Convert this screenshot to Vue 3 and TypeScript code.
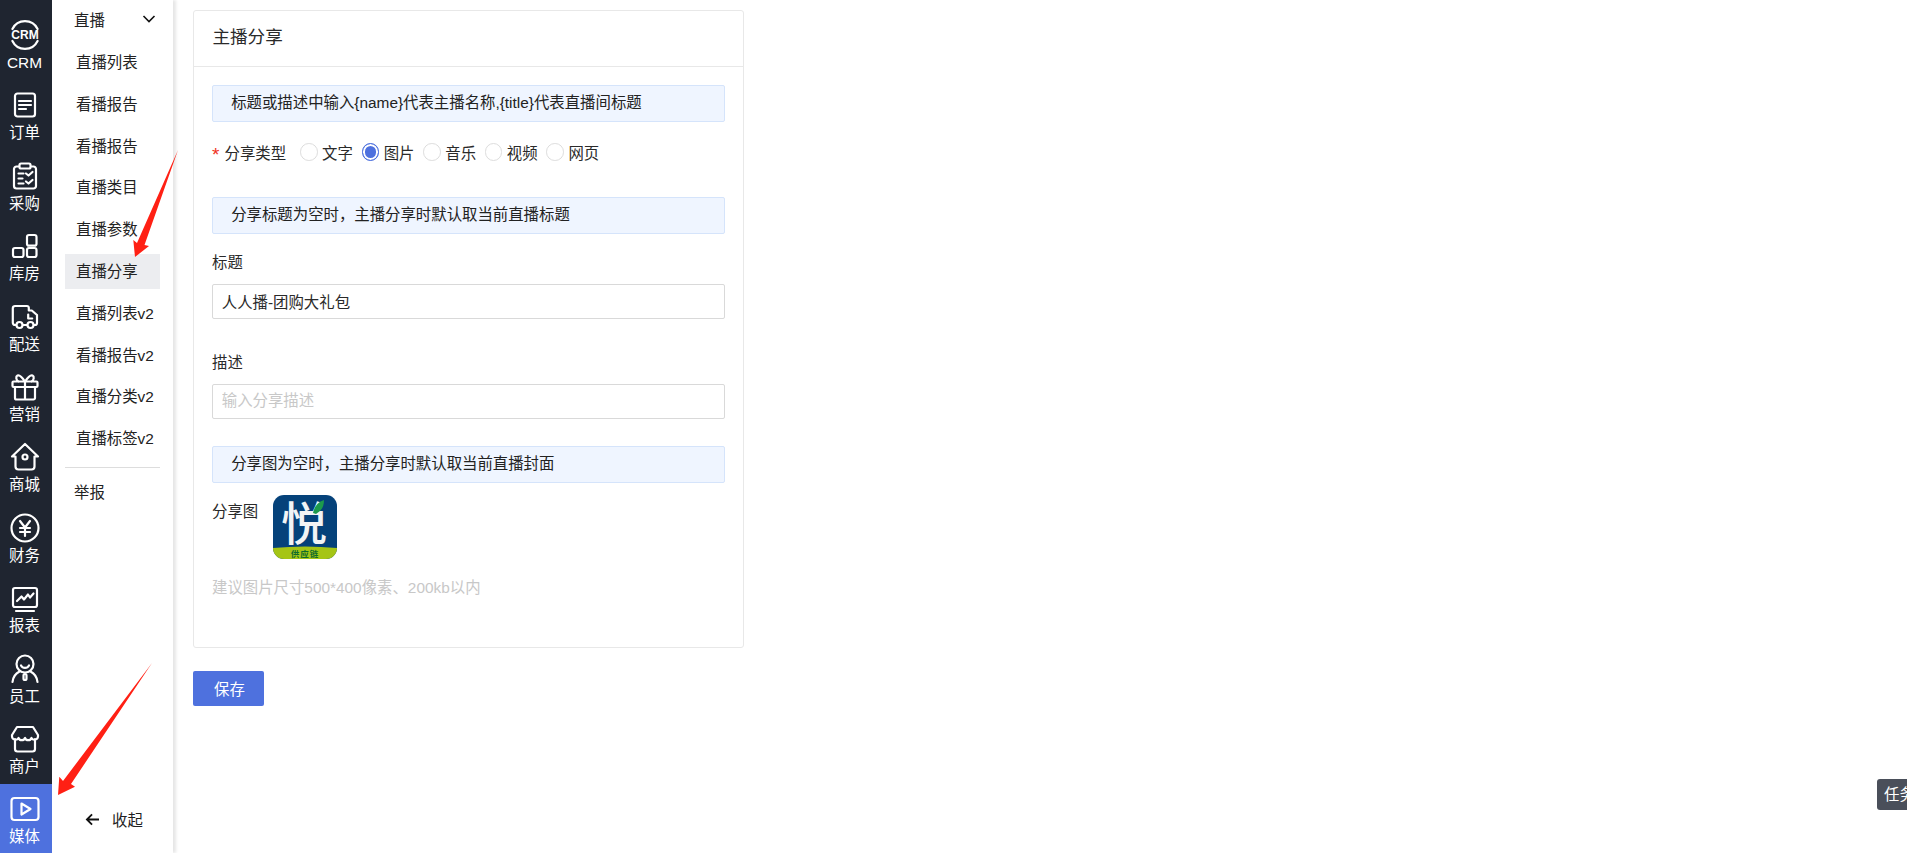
<script setup lang="ts">
interface NavItem {
  label: string;
  d: string;
  active?: boolean;
  badge?: string;
}

// 左侧主导航
const navItems: NavItem[] = [
  { label: "CRM", d: "M2.4 9A14 14 0 0 1 27.6 9M2.4 21A14 14 0 0 0 27.6 21", badge: "CRM" },
  { label: "订单", d: "M7.5 3.5h15a2.5 2.5 0 0 1 2.5 2.5v18a2.5 2.5 0 0 1-2.5 2.5h-15A2.5 2.5 0 0 1 5 24V6a2.5 2.5 0 0 1 2.5-2.5ZM9 11h12M9 15h12M9 19h7" },
  { label: "采购", d: "M9.5 5.5H6.5A2.5 2.5 0 0 0 4 8v17a2.5 2.5 0 0 0 2.5 2.5h17A2.5 2.5 0 0 0 26 25V8a2.5 2.5 0 0 0-2.5-2.5h-3M11 2.5h8a1.5 1.5 0 0 1 1.5 1.5v2A1.5 1.5 0 0 1 19 7.5h-8A1.5 1.5 0 0 1 9.5 6V4A1.5 1.5 0 0 1 11 2.5ZM8.5 12.5h5M8.5 17.5h4M8.5 22.5h5M16 12.5l2.5 2 4-3.5M16 20.5l2.5 2 4-3.5" },
  { label: "库房", d: "M19 4h5.5a2 2 0 0 1 2 2v6.7a2 2 0 0 1-2 2H19a2 2 0 0 1-2-2V6a2 2 0 0 1 2-2ZM5 17h6.5a2 2 0 0 1 2 2v5a2 2 0 0 1-2 2H5a2 2 0 0 1-2-2v-5a2 2 0 0 1 2-2ZM19 17h5.5a2 2 0 0 1 2 2v5a2 2 0 0 1-2 2H19a2 2 0 0 1-2-2v-5a2 2 0 0 1 2-2Z" },
  { label: "配送", d: "M6.5 23H5a2.2 2.2 0 0 1-2.2-2.2V6.200A2.200 2.200 0 0 1 5 4h12a1.800 1.800 0 0 1 1.800 1.800V8.500h3l5.200 4.500v8a2 2 0 0 1-2 2h-1.500M12.500 23h5M18.200 12.500v4h4M9.500 20a3 3 0 1 1 0 6 3 3 0 0 1 0-6ZM20.500 20a3 3 0 1 1 0 6 3 3 0 0 1 0-6Z" },
  { label: "营销", d: "M3.500 9.500h23a1 1 0 0 1 1 1V14a1 1 0 0 1-1 1h-23a1 1 0 0 1-1-1v-3.500a1 1 0 0 1 1-1ZM5 15v11a1.500 1.500 0 0 0 1.500 1.500h17A1.500 1.500 0 0 0 25 26V15M15 9.500v18M15 9.500C12 5 9.500 2.500 7.500 3.500 5.500 4.500 6 8 8.500 9.500M15 9.500c3-4.500 5.500-7 7.500-6 2 1 1.500 4.500-1 6" },
  { label: "商城", d: "M15 2 2 14.500h3.500v10a3 3 0 0 0 3 3h13a3 3 0 0 0 3-3v-10H28ZM15 12.500a2.500 2.500 0 1 1 0 5 2.500 2.500 0 0 1 0-5Z" },
  { label: "财务", d: "M15 1.500a13.500 13.500 0 1 1 0 27 13.500 13.500 0 0 1 0-27ZM10 8l5 6.500L20 8M10 15h10M10 19h10M15 14.500V23" },
  { label: "报表", d: "M5 5h20a2 2 0 0 1 2 2v15a2 2 0 0 1-2 2H5a2 2 0 0 1-2-2V7a2 2 0 0 1 2-2ZM6 28h18M7 18l4.500-4.500 2.500 3 4-5 2 3 3.500-4" },
  { label: "员工", d: "M15 1.500a8.500 8.500 0 1 1 0 17 8.500 8.500 0 0 1 0-17ZM11 11.500a4.500 4.500 0 0 0 8 0M9.500 17.500C5.500 19.500 3 23.500 2.500 28M20.500 17.500c4 2 6.500 6 7 10.500M15 20a1.500 1.500 0 0 1 1.500 1.500v3a1.500 1.500 0 0 1-3 0v-3A1.500 1.500 0 0 1 15 20Z" },
  { label: "商户", d: "M7 3h16l5 8v1.500a3.500 3.500 0 0 1-6.500 1.500 3.500 3.500 0 0 1-6.500 0 3.500 3.500 0 0 1-6.500 0A3.500 3.500 0 0 1 2 12.500V11ZM5 15v10a2.500 2.500 0 0 0 2.500 2.500h15A2.500 2.500 0 0 0 25 25V15" },
  { label: "媒体", d: "M4.500 4h21a3 3 0 0 1 3 3v16a3 3 0 0 1-3 3h-21a3 3 0 0 1-3-3V7a3 3 0 0 1 3-3ZM11.500 9.500 20.500 15l-9 5.500Z", active: true },
];

const subItems = ["直播列表", "看播报告", "看播报告", "直播类目", "直播参数", "直播分享", "直播列表v2", "看播报告v2", "直播分类v2", "直播标签v2"];

const shareTypes = [
  { label: "文字", checked: false },
  { label: "图片", checked: true },
  { label: "音乐", checked: false },
  { label: "视频", checked: false },
  { label: "网页", checked: false },
];
</script>

<template>
  <div class="page">
    <nav class="rail">
      <a v-for="item in navItems" :key="item.label" class="rail-item" :class="{ active: item.active }">
        <svg class="rail-icon" viewBox="0 0 30 30" width="30" height="30">
          <path :d="item.d" />
          <text v-if="item.badge" x="15" y="19.200" text-anchor="middle" class="badge">{{ item.badge }}</text>
        </svg>
        <span>{{ item.label }}</span>
      </a>
    </nav>

    <aside class="submenu">
      <div class="sub-head">
        <span>直播</span>
        <svg viewBox="0 0 14 8" width="14" height="8"><path d="M1.5 1 7 6.5 12.5 1" /></svg>
      </div>
      <a v-for="(name, i) in subItems" :key="i" class="sub-item" :class="{ current: i === 5 }">{{ name }}</a>
      <div class="sub-line"></div>
      <div class="sub-plain">举报</div>
      <div class="collapse">
        <svg viewBox="0 0 16 14" width="15" height="13"><path d="M15 7H2M7.5 1.5 2 7l5.500 5.500" /></svg>
        <span>收起</span>
      </div>
    </aside>

    <main class="content">
      <section class="card">
        <header class="card-head">主播分享</header>
        <div class="card-body">
          <div class="tip">标题或描述中输入{name}代表主播名称,{title}代表直播间标题</div>

          <div class="radio-row">
            <span class="star">*</span>
            <span class="radio-title">分享类型</span>
            <label v-for="opt in shareTypes" :key="opt.label" class="radio">
              <i :class="{ on: opt.checked }"></i>{{ opt.label }}
            </label>
          </div>

          <div class="tip tip-second">分享标题为空时，主播分享时默认取当前直播标题</div>

          <div class="field-label">标题</div>
          <input class="field" type="text" value="人人播-团购大礼包" />

          <div class="field-label label-desc">描述</div>
          <input class="field" type="text" placeholder="输入分享描述" />

          <div class="tip tip-third">分享图为空时，主播分享时默认取当前直播封面</div>

          <div class="cover-row">
            <span class="cover-label">分享图</span>
            <svg class="cover" viewBox="0 0 64 64" width="64" height="64">
              <defs>
                <clipPath id="coverClip"><rect width="64" height="64" rx="11" /></clipPath>
              </defs>
              <g clip-path="url(#coverClip)">
                <rect width="64" height="64" fill="#05427a" />
                <path d="M0 53Q32 50 64 53V64H0Z" fill="#a5c515" />
                <text x="31" y="45" text-anchor="middle" class="cover-mark">悦</text>
                <path d="M40 18Q42 8 51 5Q51 15 43 19Z" fill="#1d9a4c" />
                <text x="32" y="62" text-anchor="middle" class="cover-sub">供应链</text>
              </g>
            </svg>
          </div>

          <div class="hint">建议图片尺寸500*400像素、200kb以内</div>
        </div>
      </section>

      <button class="save" type="button">保存</button>
    </main>

    <svg class="marks" width="1907" height="853" viewBox="0 0 1907 853">
      <path d="M178 150 144.500 245 149 246 135 257 133.300 240 137 243Z" />
      <path d="M152 663 71 784 75 786.700 58 795 59.300 776.700 63 781Z" />
    </svg>

    <div class="task-tab"><span>任务</span></div>
  </div>
</template>

<style>
html,
body {
  margin: 0;
  background: #fff;
  overflow: hidden;
}
</style>

<style scoped>
.page {
  position: relative;
  display: flex;
  height: 853px;
  overflow: hidden;
  font-family: "Liberation Sans", "Noto Sans CJK SC", sans-serif;
  font-size: 15.4px;
  color: #2a2a2a;
}

.rail {
  flex: none;
  width: 52px;
  padding-top: 9.6px;
  box-sizing: border-box;
  background: #1f2530;
  color: #fff;
}

.rail-item {
  display: flex;
  flex-direction: column;
  align-items: center;
  box-sizing: border-box;
  height: 70.4px;
  padding: 10.4px 3px 0 0;
}

.rail-item.active {
  background: #4e71de;
}

.rail-icon {
  flex: none;
  overflow: visible;
}

.rail-icon path {
  fill: none;
  stroke: #fff;
  stroke-width: 2.2;
  stroke-linecap: round;
  stroke-linejoin: round;
}

.badge {
  fill: #fff;
  font-size: 12px;
  font-weight: 700;
}

.rail-item span {
  line-height: 25px;
  white-space: nowrap;
}

.submenu {
  flex: none;
  display: flex;
  flex-direction: column;
  width: 121px;
  padding: 0 13px;
  box-sizing: border-box;
  background: #fff;
  color: #222;
  box-shadow: 3px 0 3px rgba(0, 0, 0, 0.1);
  z-index: 1;
}

.sub-head {
  display: flex;
  align-items: center;
  justify-content: space-between;
  height: 38px;
  margin-bottom: 7.1px;
  padding: 0 4px 0 9px;
}

.sub-head path,
.collapse path {
  fill: none;
  stroke: #111;
  stroke-width: 1.6;
}

.collapse path {
  stroke-width: 2;
}

.sub-item {
  height: 35.2px;
  line-height: 35.2px;
  margin-bottom: 6.6px;
  padding-left: 11px;
  white-space: nowrap;
}

.sub-item.current {
  background: #ecedf0;
}

.sub-line {
  height: 1px;
  margin-top: 4px;
  background: #ddd;
}

.sub-plain {
  margin-top: 14px;
  padding-left: 9px;
  line-height: 22px;
}

.collapse {
  display: flex;
  align-items: center;
  gap: 12px;
  height: 66px;
  margin-top: auto;
  margin-bottom: 1px;
  padding-left: 20px;
}

.content {
  flex: 1;
  padding: 10px 0 0 20.4px;
}

.card {
  box-sizing: border-box;
  width: 550.5px;
  height: 638px;
  border: 1px solid #e8e8e8;
  border-radius: 3px;
}

.card-head {
  box-sizing: border-box;
  height: 56px;
  padding: 6px 0 0 18px;
  line-height: 40px;
  font-size: 17.6px;
  border-bottom: 1px solid #e8e8e8;
}

.card-body {
  padding: 18px 17.6px 0;
}

.tip {
  box-sizing: border-box;
  height: 36.7px;
  padding-left: 18.2px;
  line-height: 34.7px;
  background: #eff5ff;
  border: 1px solid #d5e4fb;
  border-radius: 2px;
  color: #222;
}

.radio-row {
  display: flex;
  align-items: center;
  height: 24px;
  margin-top: 18.3px;
}

.star {
  width: 12.5px;
  padding-top: 6px;
  color: #f0301c;
  font-size: 19px;
  line-height: 18px;
}

.radio-title {
  width: 75.5px;
}

.radio {
  display: flex;
  align-items: center;
  gap: 4.5px;
  width: 61.6px;
}

.radio i {
  box-sizing: border-box;
  width: 17.6px;
  height: 17.6px;
  border: 1px solid #ddd;
  border-radius: 50%;
}

.radio i.on {
  border: 1.5px solid #4e71de;
  background: #4e71de;
  box-shadow: inset 0 0 0 2px #fff;
}

.tip-second {
  margin-top: 33px;
}

.field-label {
  margin-top: 19.3px;
  line-height: 20px;
}

.label-desc {
  margin-top: 34.3px;
}

.field {
  display: block;
  box-sizing: border-box;
  width: 100%;
  height: 34.7px;
  margin-top: 11px;
  padding: 0 8.8px;
  border: 1px solid #d9d9d9;
  border-radius: 2px;
  outline: none;
  font: inherit;
  color: #2a2a2a;
}

.field::placeholder {
  color: #c8c8c8;
}

.tip-third {
  margin-top: 27.3px;
}

.cover-row {
  display: flex;
  align-items: flex-start;
  margin-top: 12.3px;
}

.cover-label {
  width: 61px;
  padding-top: 7.5px;
  line-height: 20px;
}

.cover-mark {
  fill: #f2f4f5;
  font-size: 46px;
  font-weight: 500;
}

.cover-sub {
  fill: #0f6b2c;
  font-size: 8.5px;
  font-weight: 700;
  letter-spacing: 1px;
}

.hint {
  margin-top: 19px;
  line-height: 20px;
  color: #c8c8c8;
}

.save {
  display: block;
  width: 71px;
  height: 35px;
  margin-top: 23.3px;
  padding: 0 0 2px 1px;
  border: 0;
  border-radius: 2px;
  background: #4e71de;
  color: #fff;
  font: inherit;
}

.marks {
  position: absolute;
  top: 0;
  left: 0;
  z-index: 2;
  pointer-events: none;
}

.marks path {
  fill: #ff2014;
}

.task-tab {
  position: absolute;
  top: 779px;
  right: 0;
  box-sizing: border-box;
  width: 30px;
  height: 31px;
  padding-left: 7px;
  border-radius: 3px 0 0 3px;
  overflow: hidden;
  background: #4a4f5a;
  color: #fff;
  line-height: 31px;
  white-space: nowrap;
}
</style>
